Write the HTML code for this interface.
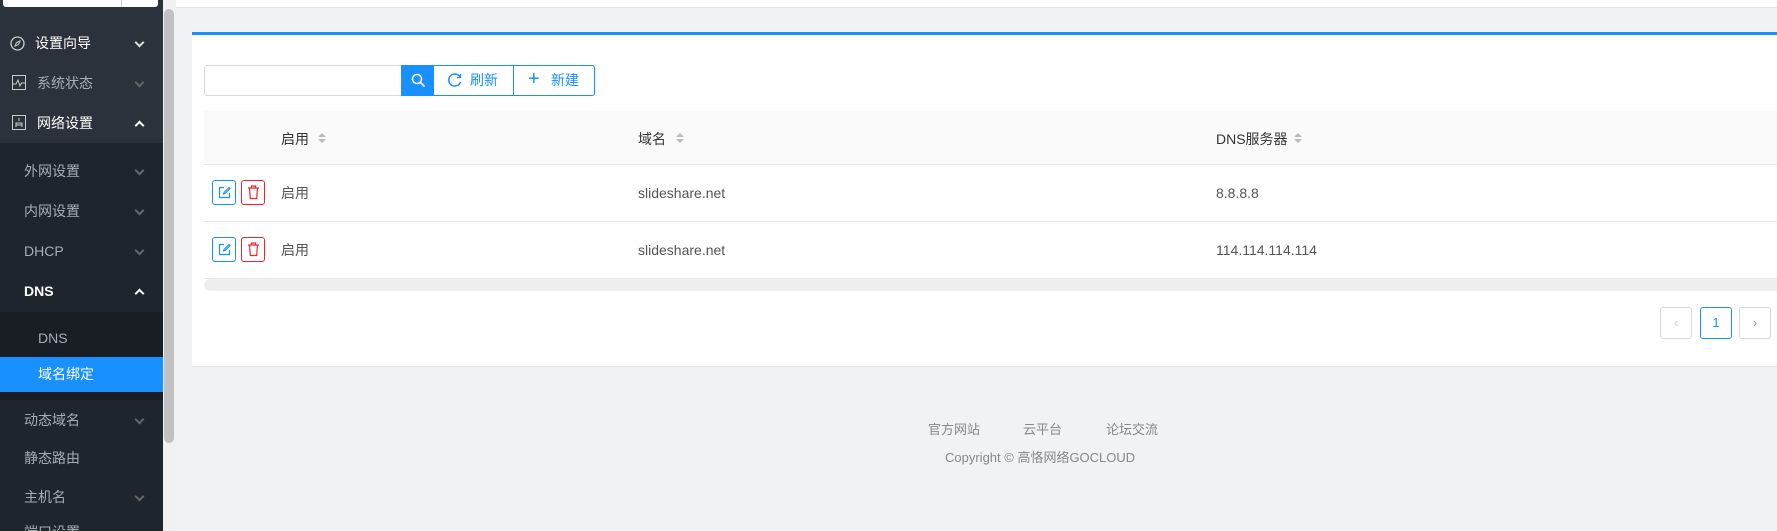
<!DOCTYPE html>
<html style="width:1777px;height:531px;overflow:hidden"><head><meta charset="utf-8"><style>
*{margin:0;padding:0;box-sizing:border-box}
body{width:1777px;height:531px;overflow:hidden;background:#f0f2f5;font-family:"Liberation Sans","Noto Sans CJK SC",sans-serif;font-size:14px}
#wrap{position:relative;width:1777px;height:531px;overflow:hidden}
.side{position:absolute;left:0;top:0;width:163px;height:531px;background:#1f252d}
.top{position:absolute;left:0;top:0;width:163px;height:143px;background:#2b323c}
.sb{position:absolute;left:163px;top:0;width:13px;height:531px;background:#f1f1f1}
.thumb{position:absolute;left:164px;top:9px;width:10px;height:434px;background:#c1c1c1;border-radius:5px}
.it{position:absolute;left:0;width:163px;height:20px;line-height:20px;color:#a6adb4}
.it .t{position:absolute}
.ch{position:absolute;left:136px;top:6px;width:7px;height:7px;border-right:2px solid #a6adb4;border-bottom:2px solid #a6adb4;transform:rotate(45deg)}
.up{top:9px;transform:rotate(225deg);border-color:#fff}
.w{color:#fff}
.card{position:absolute;left:192px;top:32px;width:1600px;height:335px;background:#fff;border-top:3px solid #1890ff;border-bottom:1px solid #e8e8e8}
.btn{position:absolute;top:65px;height:31px;border:1px solid #1890ff;color:#1890ff;line-height:29px;font-size:14px;background:#fff}
.th{position:absolute;left:204px;top:111px;width:1600px;height:54px;background:#fafafa;border-bottom:1px solid #e8e8e8}
.row{position:absolute;left:204px;width:1600px;height:57px;border-bottom:1px solid #e8e8e8;color:#555}
.c{position:absolute;top:0;line-height:56px}
.srt{position:absolute;width:0;height:0;border-left:4px solid transparent;border-right:4px solid transparent}
.ib{position:absolute;top:15px;width:24px;height:25px;border:1px solid;border-radius:3px}
.pg{position:absolute;top:307px;width:32px;height:32px;border:1px solid #d9d9d9;border-radius:3px;text-align:center;line-height:30px;color:#1890ff;font-size:13px}
.ft{position:absolute;color:#888;font-size:13px}
</style></head><body><div id="wrap">
<div style="position:absolute;left:176px;top:0;width:1601px;height:8px;background:#fff;border-bottom:1px solid #e3e3e3"></div>
<div class="side"></div><div class="top"></div>
<div style="position:absolute;left:3px;top:0;width:155px;height:7px;background:#fff;border-radius:0 0 3px 3px"></div>
<div style="position:absolute;left:121px;top:0;width:1px;height:7px;background:#ccc"></div>
<div class="sb"></div><div class="thumb"></div>
<div class="it w" style="top:33px"><svg style="position:absolute;left:10px;top:3px" width="15" height="15" viewBox="0 0 15 15"><circle cx="7.5" cy="7.5" r="6.5" fill="none" stroke="#ccc" stroke-width="1.3"/><path d="M10 5L8.5 8.5 5 10 6.5 6.5Z" fill="none" stroke="#ccc"/></svg><span class="t" style="left:35px">设置向导</span><i class="ch" style="border-color:#ddd"></i></div>
<div class="it" style="top:73px"><svg style="position:absolute;left:12px;top:2px" width="14" height="15" viewBox="0 0 14 15"><rect x=".5" y=".5" width="13" height="14" fill="none" stroke="#ccc"/><path d="M1 9h3l2-4 2 6 1.5-3H13" fill="none" stroke="#ccc"/></svg><span class="t" style="left:37px">系统状态</span><i class="ch" style="border-color:#666"></i></div>
<div class="it w" style="top:113px"><svg style="position:absolute;left:12px;top:2px" width="14" height="15" viewBox="0 0 14 15"><rect x=".5" y=".5" width="13" height="14" fill="none" stroke="#ccc"/><path d="M7 3v3M4 12V8h6v4M4 10h6" fill="none" stroke="#ccc"/></svg><span class="t" style="left:37px">网络设置</span><i class="ch up"></i></div>
<div class="it" style="top:161px"><span class="t" style="left:24px">外网设置</span><i class="ch" style="border-color:#666"></i></div>
<div class="it" style="top:201px"><span class="t" style="left:24px">内网设置</span><i class="ch" style="border-color:#666"></i></div>
<div class="it" style="top:241px"><span class="t" style="left:24px">DHCP</span><i class="ch" style="border-color:#666"></i></div>
<div class="it w" style="top:281px;font-weight:bold"><span class="t" style="left:24px">DNS</span><i class="ch up"></i></div>
<div style="position:absolute;left:0;top:312px;width:163px;height:88px;background:#191e25"></div>
<div class="it" style="top:328px"><span class="t" style="left:38px">DNS</span></div>
<div style="position:absolute;left:0;top:357px;width:163px;height:35px;background:#1890ff"></div>
<div class="it w" style="top:364px"><span class="t" style="left:38px">域名绑定</span></div>
<div class="it" style="top:410px"><span class="t" style="left:24px">动态域名</span><i class="ch" style="border-color:#666"></i></div>
<div class="it" style="top:448px"><span class="t" style="left:24px">静态路由</span></div>
<div class="it" style="top:487px"><span class="t" style="left:24px">主机名</span><i class="ch" style="border-color:#666"></i></div>
<div class="it" style="top:522px;height:9px;overflow:hidden"><span class="t" style="left:24px">端口设置</span></div>

<div class="card"></div>
<div style="position:absolute;left:204px;top:65px;width:198px;height:31px;border:1px solid #d9d9d9;border-radius:3px 0 0 3px;background:#fff"></div>
<div class="btn" style="left:401px;width:33px;background:#1890ff"><svg style="position:absolute;left:9px;top:7px" width="15" height="15" viewBox="0 0 15 15"><circle cx="6" cy="6" r="4.5" fill="none" stroke="#fff" stroke-width="1.6"/><path d="M9.5 9.5L13.5 13.5" stroke="#fff" stroke-width="1.6"/></svg></div>
<div class="btn" style="left:433px;width:81px"><svg style="position:absolute;left:14px;top:7px" width="14" height="14" viewBox="0 0 14 14"><path d="M12 4A6 6 0 1 0 12.5 9" fill="none" stroke="#1890ff" stroke-width="1.5"/><path d="M12.5 1v3.5H9" fill="none" stroke="#1890ff" stroke-width="1.3"/></svg><span style="position:absolute;left:36px">刷新</span></div>
<div class="btn" style="left:513px;width:82px;border-radius:0 3px 3px 0"><span style="position:absolute;left:14px;font-size:20px;top:-1px">+</span><span style="position:absolute;left:37px">新建</span></div>

<div class="th"><span class="c" style="left:77px;color:#333">启用</span><span class="srt" style="left:114px;top:22px;border-bottom:4px solid #bbb"></span><span class="srt" style="left:114px;top:28px;border-top:4px solid #bbb"></span>
<span class="c" style="left:434px;color:#333">域名</span><span class="srt" style="left:472px;top:22px;border-bottom:4px solid #bbb"></span><span class="srt" style="left:472px;top:28px;border-top:4px solid #bbb"></span>
<span class="c" style="left:1012px;color:#333">DNS服务器</span><span class="srt" style="left:1090px;top:22px;border-bottom:4px solid #bbb"></span><span class="srt" style="left:1090px;top:28px;border-top:4px solid #bbb"></span></div>
<div class="row" style="top:165px"><div class="ib" style="left:8px;border-color:#1890ff"><svg style="position:absolute;left:5px;top:5px" width="13" height="13" viewBox="0 0 13 13"><path d="M6 1.5H1.5v10h10V7" fill="none" stroke="#1890ff" stroke-width="1.2"/><path d="M11 1.5l-5 5-.5 1.5 1.5-.5 5-5z" fill="none" stroke="#1890ff" stroke-width="1.1"/></svg></div><div class="ib" style="left:37px;border-color:#f5222d"><svg style="position:absolute;left:5px;top:4px" width="13" height="15" viewBox="0 0 13 15"><path d="M1 3h11M4.5 3V1h4v2M2.5 3l.8 10.5h6.4L10.5 3" fill="none" stroke="#f5222d" stroke-width="1.2"/></svg></div><span class="c" style="left:77px">启用</span><span class="c" style="left:434px">slideshare.net</span><span class="c" style="left:1012px">8.8.8.8</span></div>
<div class="row" style="top:222px"><div class="ib" style="left:8px;border-color:#1890ff"><svg style="position:absolute;left:5px;top:5px" width="13" height="13" viewBox="0 0 13 13"><path d="M6 1.5H1.5v10h10V7" fill="none" stroke="#1890ff" stroke-width="1.2"/><path d="M11 1.5l-5 5-.5 1.5 1.5-.5 5-5z" fill="none" stroke="#1890ff" stroke-width="1.1"/></svg></div><div class="ib" style="left:37px;border-color:#f5222d"><svg style="position:absolute;left:5px;top:4px" width="13" height="15" viewBox="0 0 13 15"><path d="M1 3h11M4.5 3V1h4v2M2.5 3l.8 10.5h6.4L10.5 3" fill="none" stroke="#f5222d" stroke-width="1.2"/></svg></div><span class="c" style="left:77px">启用</span><span class="c" style="left:434px">slideshare.net</span><span class="c" style="left:1012px">114.114.114.114</span></div>
<div style="position:absolute;left:204px;top:279px;width:1600px;height:12px;background:#eee;border-radius:6px"></div>
<div class="pg" style="left:1660px;color:#ccc">&lsaquo;</div>
<div class="pg" style="left:1700px;border-color:#1890ff">1</div>
<div class="pg" style="left:1739px;color:#999">&rsaquo;</div>
<div class="ft" style="left:928px;top:419px">官方网站</div>
<div class="ft" style="left:1023px;top:419px">云平台</div>
<div class="ft" style="left:1106px;top:419px">论坛交流</div>
<div class="ft" style="left:945px;top:447px">Copyright © 高恪网络GOCLOUD</div>
</div></body></html>
